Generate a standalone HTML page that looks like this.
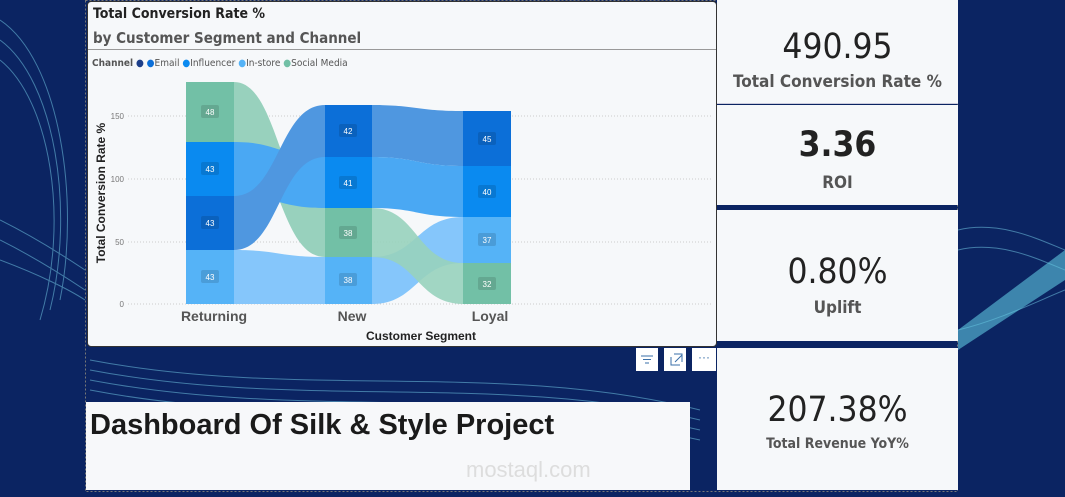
<!DOCTYPE html>
<html><head><meta charset="utf-8"><style>
*{margin:0;padding:0;box-sizing:border-box}
body{width:1065px;height:497px;overflow:hidden;background:#0b2462;font-family:"Liberation Sans",sans-serif;position:relative}
.abs{position:absolute}
.card{background:#f6f8fa}
.kn{font-family:"DejaVu Sans Condensed","Liberation Sans",sans-serif;color:#222;text-align:center;width:100%;position:absolute}
.kl{font-family:"DejaVu Sans Condensed","Liberation Sans",sans-serif;color:#555;font-weight:bold;text-align:center;width:100%;position:absolute}
.btn{background:#fff;width:22px;height:23px;position:absolute;top:348px}
</style></head><body>
<svg class="abs" style="left:0;top:0" width="1065" height="497">
<g fill="none" stroke="#6fc3e0" stroke-width="1" opacity=".55">
<path d="M0 20 C60 60 80 200 60 300"/><path d="M0 40 C55 80 75 210 50 310"/><path d="M0 60 C50 100 70 220 40 320"/>
<path d="M0 220 C40 240 70 260 85 270"/><path d="M0 240 C40 260 70 280 85 290"/><path d="M0 260 C40 275 70 290 85 300"/>
<path d="M90 360 C300 400 500 360 700 410"/><path d="M90 370 C300 410 500 372 700 420"/><path d="M90 380 C300 420 500 384 700 430"/><path d="M90 390 C300 430 500 396 700 440"/>
<path d="M958 230 C1000 220 1040 240 1065 250"/><path d="M958 250 C1000 240 1040 260 1065 270"/><path d="M958 330 C1000 320 1040 300 1065 290"/>
</g>
<path d="M958 330 L1065 250 L1065 280 L958 350Z" fill="#5fc6e0" opacity=".6"/>
<rect x="85.5" y="0.5" width="872" height="491" fill="none" stroke="#777" stroke-dasharray="2 2"/>
</svg>

<div class="abs card" style="left:87px;top:1px;width:630px;height:346px;border:1px solid #333;border-radius:4px">
<div class="abs" style="left:5px;top:4px;font-family:'DejaVu Sans Condensed','Liberation Sans',sans-serif;font-weight:bold;font-size:14px;color:#222">Total Conversion Rate %</div>
<div class="abs" style="left:5px;top:27px;font-family:'DejaVu Sans Condensed','Liberation Sans',sans-serif;font-weight:bold;font-size:15px;color:#555">by Customer Segment and Channel</div>
<div class="abs" style="left:0;top:47px;width:628px;height:1px;background:#999"></div>
<div class="abs" style="left:4px;top:56px;font-family:'DejaVu Sans Condensed','Liberation Sans',sans-serif;font-size:10px;color:#555;white-space:nowrap"><b>Channel</b> <span style="color:#1d3f8a">●</span> <span style="color:#0c6fd8">●</span>Email <span style="color:#0a8af0">●</span>Influencer <span style="color:#55b3f7">●</span>In-store <span style="color:#72c0a6">●</span>Social Media</div>
</div>
<svg class="abs" style="left:0;top:0" width="720" height="350" font-family="Liberation Sans,sans-serif">
<g stroke="#ccc" stroke-dasharray="1 2"><line x1="128" y1="116" x2="712" y2="116"/><line x1="128" y1="179" x2="712" y2="179"/><line x1="128" y1="242" x2="712" y2="242"/><line x1="128" y1="304" x2="712" y2="304"/></g>
<g font-size="8" fill="#777" text-anchor="end"><text x="124" y="119">150</text><text x="124" y="182">100</text><text x="124" y="245">50</text><text x="124" y="307">0</text></g>
<text transform="translate(105,193) rotate(-90)" text-anchor="middle" font-size="12" font-weight="bold" fill="#222">Total Conversion Rate %</text>
<g>
<path d="M234 82 C279 82 279 208 325 208 L325 257 C279 257 279 142 234 142Z" fill="#98d1bd"/>
<path d="M234 142 C279 142 279 157 325 157 L325 208 C279 208 279 196 234 196Z" fill="#4aa8f3"/>
<path d="M234 196 C279 196 279 105 325 105 L325 157 C279 157 279 250 234 250Z" fill="#4f97e0"/>
<path d="M234 250 C279 250 279 257 325 257 L325 304 C279 304 279 304 234 304Z" fill="#85c6fb"/>
<path d="M372 105 C417 105 417 111 463 111 L463 166 C417 166 417 157 372 157Z" fill="#4f97e0"/>
<path d="M372 157 C417 157 417 166 463 166 L463 217 C417 217 417 208 372 208Z" fill="#4aa8f3"/>
<path d="M372 257 C417 257 417 217 463 217 L463 263 C417 263 417 304 372 304Z" fill="#85c6fb"/>
<path d="M372 208 C417 208 417 263 463 263 L463 304 C417 304 417 257 372 257Z" fill="#98d1bd" opacity=".9"/>
</g>
<rect x="186" y="82" width="48" height="60" fill="#72c0a6"/><rect x="186" y="142" width="48" height="54" fill="#0a8af0"/><rect x="186" y="196" width="48" height="54" fill="#0c6fd8"/><rect x="186" y="250" width="48" height="54" fill="#55b3f7"/>
<rect x="325" y="105" width="47" height="52" fill="#0c6fd8"/><rect x="325" y="157" width="47" height="51" fill="#0a8af0"/><rect x="325" y="208" width="47" height="49" fill="#72c0a6"/><rect x="325" y="257" width="47" height="47" fill="#55b3f7"/>
<rect x="463" y="111" width="48" height="55" fill="#0c6fd8"/><rect x="463" y="166" width="48" height="51" fill="#0a8af0"/><rect x="463" y="217" width="48" height="46" fill="#55b3f7"/><rect x="463" y="263" width="48" height="41" fill="#72c0a6"/>
<g fill="#000" opacity=".12">
<rect x="201" y="105" width="18" height="13" rx="2"/><rect x="201" y="162" width="18" height="13" rx="2"/><rect x="201" y="216" width="18" height="13" rx="2"/><rect x="201" y="270" width="18" height="13" rx="2"/>
<rect x="339" y="124" width="18" height="13" rx="2"/><rect x="339" y="176" width="18" height="13" rx="2"/><rect x="339" y="226" width="18" height="13" rx="2"/><rect x="339" y="273" width="18" height="13" rx="2"/>
<rect x="478" y="132" width="18" height="13" rx="2"/><rect x="478" y="185" width="18" height="13" rx="2"/><rect x="478" y="233" width="18" height="13" rx="2"/><rect x="478" y="277" width="18" height="13" rx="2"/>
</g>
<g font-size="8" fill="#fff" text-anchor="middle">
<text x="210" y="115">48</text><text x="210" y="172">43</text><text x="210" y="226">43</text><text x="210" y="280">43</text>
<text x="348" y="134">42</text><text x="348" y="186">41</text><text x="348" y="236">38</text><text x="348" y="283">38</text>
<text x="487" y="142">45</text><text x="487" y="195">40</text><text x="487" y="243">37</text><text x="487" y="287">32</text>
</g>
<g font-size="14" font-weight="bold" fill="#555" text-anchor="middle"><text x="214" y="321">Returning</text><text x="352" y="321">New</text><text x="490" y="321">Loyal</text></g>
<text x="421" y="340" text-anchor="middle" font-size="12" font-weight="bold" fill="#222">Customer Segment</text>
</svg>

<div class="btn" style="left:636px"><svg width="22" height="23"><g stroke="#3a6fa8"><line x1="5" y1="8" x2="17" y2="8"/><line x1="7" y1="11.5" x2="15" y2="11.5"/><line x1="9" y1="15" x2="13" y2="15"/></g></svg></div>
<div class="btn" style="left:664px"><svg width="24" height="23"><path d="M7 9v8h9M10 6h8v8M11 14l7-7" fill="none" stroke="#3a6fa8"/></svg></div>
<div class="btn" style="left:692px;width:24px;color:#3a6fa8;font-size:12px;text-align:center;line-height:18px">···</div>

<div class="abs" style="left:86px;top:402px;width:604px;height:88px;background:#f7f8fa">
<div class="abs" style="left:4px;top:7px;font-size:29px;font-weight:bold;color:#1a1a1a;white-space:nowrap">Dashboard Of Silk &amp; Style Project</div>
<div class="abs" style="left:380px;top:55px;font-size:22px;color:#ddd;white-space:nowrap">mostaql.com</div>
</div>

<div class="abs card" style="left:717px;top:0;width:241px;height:104px;border-bottom:1px solid #ccd">
<div class="kn" style="top:27px;font-size:35px">490.95</div><div class="kl" style="top:72px;font-size:17px">Total Conversion Rate %</div></div>
<div class="abs card" style="left:717px;top:105px;width:241px;height:100px">
<div class="kn" style="top:20px;font-size:35px;font-weight:bold">3.36</div><div class="kl" style="top:68px;font-size:17px">ROI</div></div>
<div class="abs card" style="left:717px;top:210px;width:241px;height:131px">
<div class="kn" style="top:42px;font-size:35px">0.80%</div><div class="kl" style="top:88px;font-size:17px">Uplift</div></div>
<div class="abs card" style="left:717px;top:348px;width:241px;height:142px">
<div class="kn" style="top:42px;font-size:35px">207.38%</div><div class="kl" style="top:88px;font-size:14px">Total Revenue YoY%</div></div>
</body></html>
